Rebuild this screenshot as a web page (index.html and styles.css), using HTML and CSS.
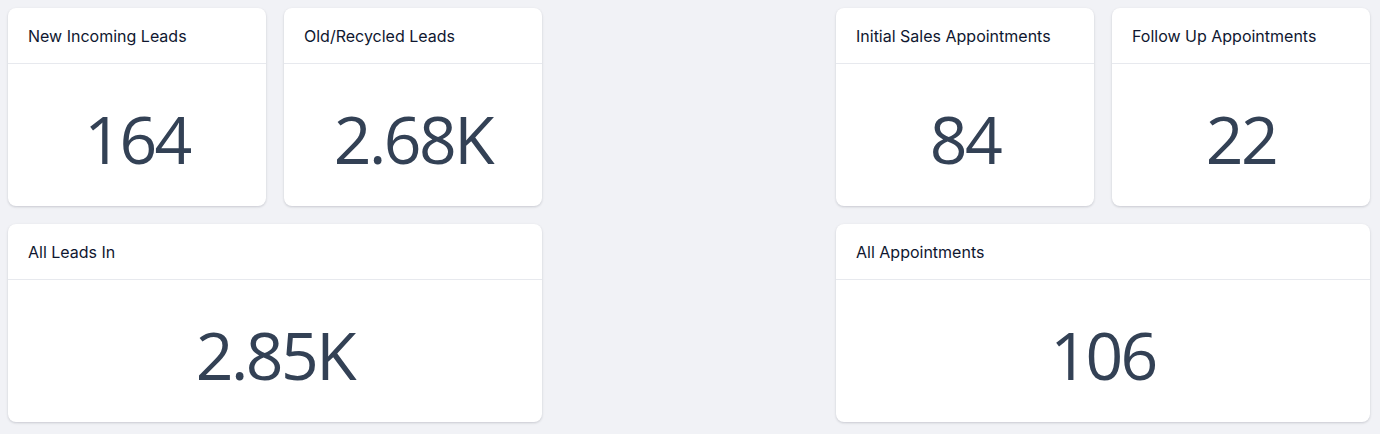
FILE: index.html
```html
<!DOCTYPE html>
<html>
<head>
<meta charset="utf-8">
<link rel="stylesheet" href="styles.css">
</head>
<body>
<div class="grid">
  <div class="card c1 r1"><div class="head">New Incoming Leads</div><div class="val">164</div></div>
  <div class="card c2 r1"><div class="head">Old/Recycled Leads</div><div class="val">2.68K</div></div>
  <div class="card c4 r1"><div class="head">Initial Sales Appointments</div><div class="val">84</div></div>
  <div class="card c5 r1"><div class="head">Follow Up Appointments</div><div class="val">22</div></div>
  <div class="card wide-left r2"><div class="head">All Leads In</div><div class="val">2.85K</div></div>
  <div class="card wide-right r2"><div class="head">All Appointments</div><div class="val">106</div></div>
</div>
</body>
</html>
```
FILE: styles.css
```css
html, body { margin: 0; padding: 0; }
body {
  background: #f1f2f6;
  padding: 8px;
  font-family: Inter, "Noto Sans", sans-serif;
}
.grid {
  display: grid;
  grid-template-columns: repeat(5, 258px);
  grid-template-rows: 198px 198px;
  column-gap: 18px;
  row-gap: 18px;
}
.card {
  background: #fff;
  border-radius: 8px;
  box-shadow: 0 1px 3px rgba(15, 23, 42, 0.12), 0 1px 2px rgba(15, 23, 42, 0.06);
  display: flex;
  flex-direction: column;
  overflow: hidden;
}
.c1 { grid-column: 1; }
.c2 { grid-column: 2; }
.c4 { grid-column: 4; }
.c5 { grid-column: 5; }
.r1 { grid-row: 1; }
.r2 { grid-row: 2; }
.wide-left { grid-column: 1 / span 2; }
.wide-right { grid-column: 4 / span 2; }
.head {
  height: 56px;
  border-bottom: 1px solid #e7e9ee;
  padding: 0 20px;
  display: flex;
  align-items: center;
  font-size: 16px;
  font-weight: 430;
  color: #0f1730;
  box-sizing: border-box;
}
.val {
  flex: 1;
  display: flex;
  align-items: center;
  justify-content: center;
  font-family: "Open Sans", "Noto Sans", sans-serif;
  font-size: 66px;
  letter-spacing: -2.5px;
  color: #334155;
  padding-top: 6px;
}
```
